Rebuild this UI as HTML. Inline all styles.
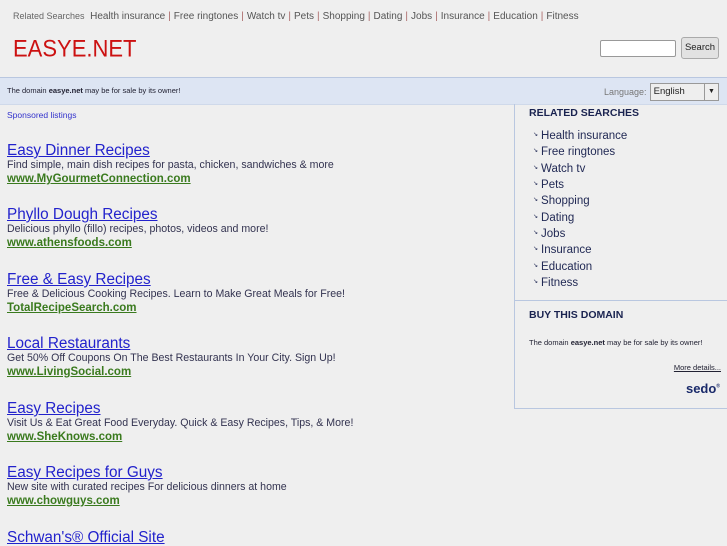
<!DOCTYPE html>
<html><head><style>
body{margin:0;width:727px;height:545px;overflow:hidden;background:#efefef;font-family:"Liberation Sans",sans-serif;position:relative}
.a{position:absolute;white-space:nowrap}
.top{left:13px;top:11px;font-size:10px;color:#555}
.top span{color:#666;font-size:9px}
.top i{font-style:normal;color:#aa6666;margin:0 3px}
.logo{left:13px;top:35px;font-size:22px;color:#cc1111;transform:scaleY(1.08);transform-origin:top left}
.inp{left:600px;top:40px;width:74px;height:15px;background:#fff;border:1px solid #999;border-radius:2px}
.btn{left:681px;top:37px;width:36px;height:20px;background:#e2e2e2;border:1px solid #aaa;border-radius:3px;font-size:9.5px;text-align:center;line-height:20px;color:#222}
.ban{left:0;top:77px;width:727px;height:26px;background:#dde5f3;border-top:1px solid #b9c7e0;border-bottom:1px solid #cfd9ea}
.ban .t{position:absolute;left:7px;top:8px;font-size:7.5px;color:#223}
.lang{position:absolute;left:604px;top:9px;font-size:9px;color:#777}
.sel{position:absolute;left:650px;top:5px;width:67px;height:16px;background:#eee;border:1px solid #999;font-size:9.5px;line-height:16px;color:#222}
.sel span{position:absolute;right:0;top:0;width:13px;height:16px;border-left:1px solid #999;font-size:7px;text-align:center}
.sp{left:7px;top:110px;font-size:8.5px;color:#3333cc}
.l{left:7px;position:absolute}
.l b{display:block;font-weight:normal;font-size:15.3px;color:#2222cc;text-decoration:underline;line-height:17px}
.l p{margin:0;font-size:10.6px;color:#333350;line-height:13px}
.l u{display:block;font-size:11.5px;font-weight:bold;color:#3a7a1e;line-height:14px}
.panel{left:514px;top:104px;width:212px;height:304px;border:1px solid #b9c7e0;border-top:none}
.panel h4{position:absolute;left:14px;margin:0;font-size:10.5px;color:#1a2350}
.panel ul{position:absolute;left:18px;top:24px;margin:0;padding:0;list-style:none}
.panel li{font-size:11.5px;color:#222a55;height:16.35px;line-height:16px}
.panel li:before{content:"\2198";font-size:6px;margin-right:3px;vertical-align:3px;line-height:0}
.hr{position:absolute;left:0;top:196px;width:212px;border-top:1px solid #b9c7e0}
</style></head><body>
<div class="a top"><span>Related Searches</span>&nbsp; Health insurance<i>|</i>Free ringtones<i>|</i>Watch tv<i>|</i>Pets<i>|</i>Shopping<i>|</i>Dating<i>|</i>Jobs<i>|</i>Insurance<i>|</i>Education<i>|</i>Fitness</div>
<div class="a logo">EASYE.NET</div>
<div class="a inp"></div>
<div class="a btn">Search</div>
<div class="a ban"><div class="t">The domain <b>easye.net</b> may be for sale by its owner!</div><div class="lang">Language:</div><div class="sel">&nbsp;English<span>▼</span></div></div>
<div class="a sp">Sponsored listings</div>
<div class="l" style="top:142px"><b>Easy Dinner Recipes</b><p>Find simple, main dish recipes for pasta, chicken, sandwiches &amp; more</p><u>www.MyGourmetConnection.com</u></div>
<div class="l" style="top:206px"><b>Phyllo Dough Recipes</b><p>Delicious phyllo (fillo) recipes, photos, videos and more!</p><u>www.athensfoods.com</u></div>
<div class="l" style="top:271px"><b>Free &amp; Easy Recipes</b><p>Free &amp; Delicious Cooking Recipes. Learn to Make Great Meals for Free!</p><u>TotalRecipeSearch.com</u></div>
<div class="l" style="top:335px"><b>Local Restaurants</b><p>Get 50% Off Coupons On The Best Restaurants In Your City. Sign Up!</p><u>www.LivingSocial.com</u></div>
<div class="l" style="top:400px"><b>Easy Recipes</b><p>Visit Us &amp; Eat Great Food Everyday. Quick &amp; Easy Recipes, Tips, &amp; More!</p><u>www.SheKnows.com</u></div>
<div class="l" style="top:464px"><b>Easy Recipes for Guys</b><p>New site with curated recipes For delicious dinners at home</p><u>www.chowguys.com</u></div>
<div class="l" style="top:529px"><b>Schwan's® Official Site</b></div>
<div class="a panel">
<h4 style="top:3px">RELATED SEARCHES</h4>
<ul><li>Health insurance</li><li>Free ringtones</li><li>Watch tv</li><li>Pets</li><li>Shopping</li><li>Dating</li><li>Jobs</li><li>Insurance</li><li>Education</li><li>Fitness</li></ul>
<div class="hr"></div>
<h4 style="top:205px">BUY THIS DOMAIN</h4>
<div style="position:absolute;left:14px;top:234px;font-size:7.5px;color:#223">The domain <b>easye.net</b> may be for sale by its owner!</div>
<div style="position:absolute;right:6px;top:259px;font-size:7.5px;color:#223;text-decoration:underline">More details...</div>
<div style="position:absolute;right:7px;top:277px;font-size:13px;font-weight:bold;color:#1a2a6a">sedo<sup style="font-size:5px">®</sup></div>
</div>
</body></html>
